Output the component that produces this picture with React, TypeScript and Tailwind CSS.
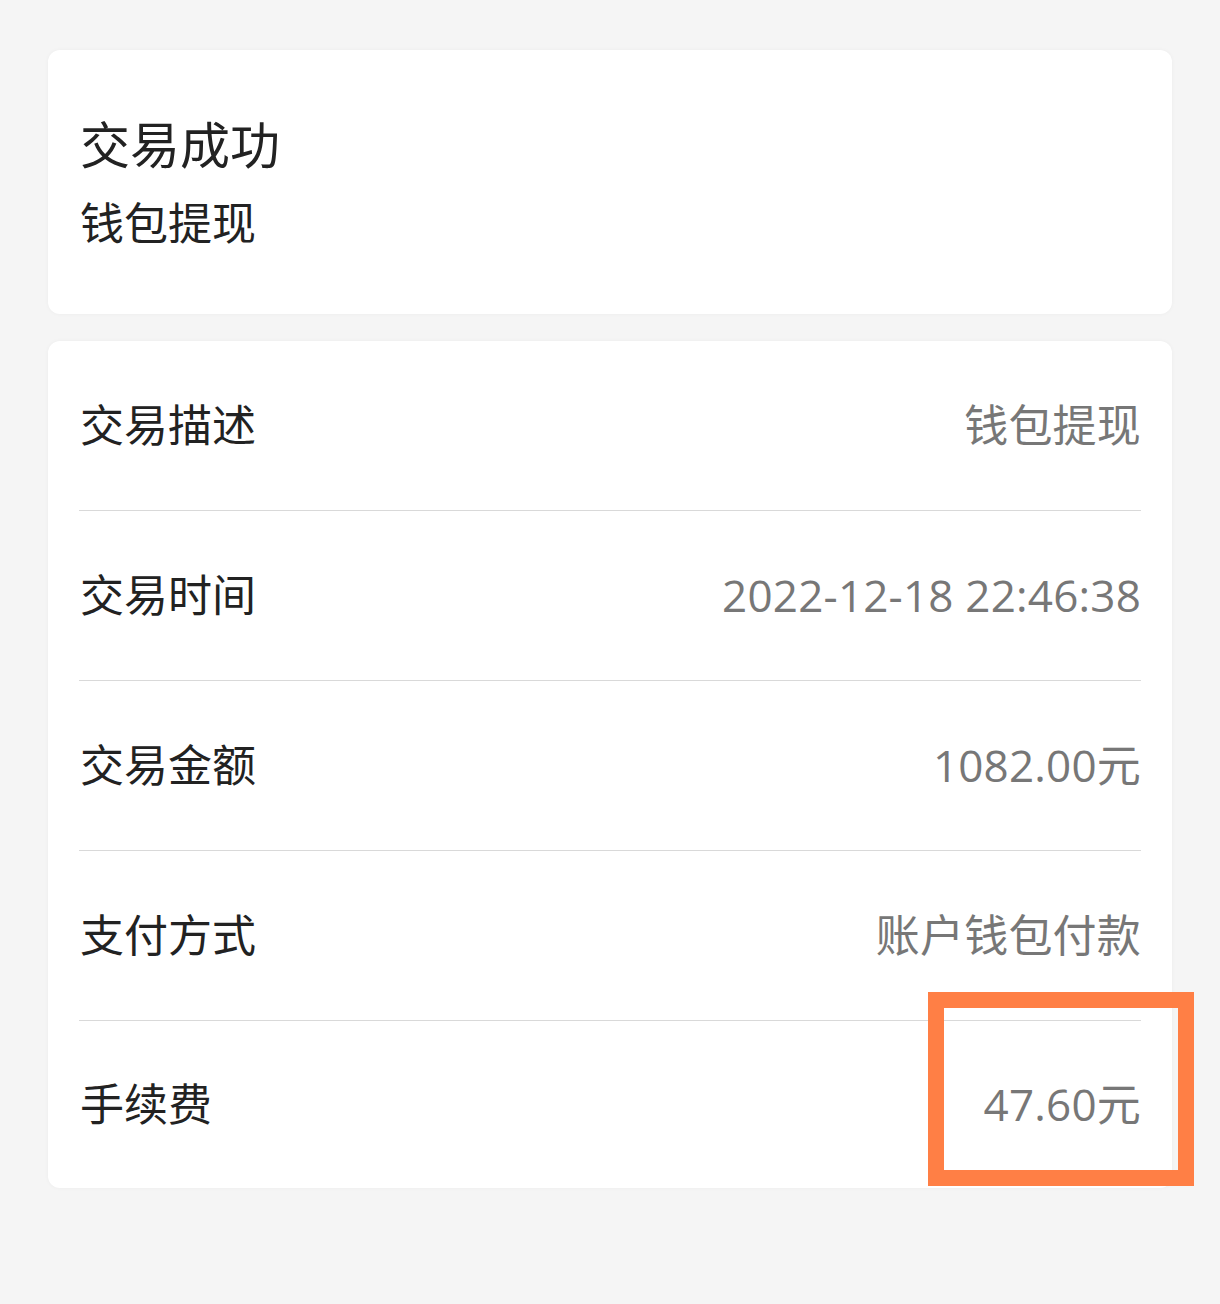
const rows = [
  { label: "交易描述", value: "钱包提现" },
  { label: "交易时间", value: "2022-12-18 22:46:38" },
  { label: "交易金额", value: "1082.00元" },
  { label: "支付方式", value: "账户钱包付款" },
  { label: "手续费", value: "47.60元" },
];

export default function App() {
  return (
    <div
      className="relative min-h-[1304px] w-[1220px] bg-[#f5f5f5] px-12 pt-[50px]"
      style={{ fontFamily: '"Noto Sans CJK SC", "Noto Sans", sans-serif' }}
    >
      <div className="flex h-[264px] flex-col justify-center rounded-xl bg-white px-8 pb-[4px] shadow-[0_0_4px_rgba(0,0,0,0.04)]">
        <div className="text-[50px] leading-none text-[#222]">交易成功</div>
        <div className="mt-[32px] text-[44px] leading-none text-[#222]">钱包提现</div>
      </div>

      <div className="mt-[27px] rounded-xl bg-white px-[31px] shadow-[0_0_4px_rgba(0,0,0,0.04)]">
        {rows.map((r, i) => (
          <div
            key={r.label}
            className={
              "flex items-center pb-[3px] " +
              (i < rows.length - 1 ? "h-[170px] border-b border-[#d9d9d9]" : "h-[167px]")
            }
          >
            <div className="flex w-full items-baseline justify-between">
              <span className="pl-px text-[44px] leading-none text-[#222]">{r.label}</span>
              <span className="font-['Open_Sans','Noto_Sans_CJK_SC',sans-serif] text-[44px] leading-none tracking-[0.2px] text-[#777]">
                {r.value}
              </span>
            </div>
          </div>
        ))}
      </div>

      {/* highlight annotation */}
      <div className="absolute left-[928px] top-[992px] h-[194px] w-[266px] border-[16px] border-[#ff7f45]" />
    </div>
  );
}
